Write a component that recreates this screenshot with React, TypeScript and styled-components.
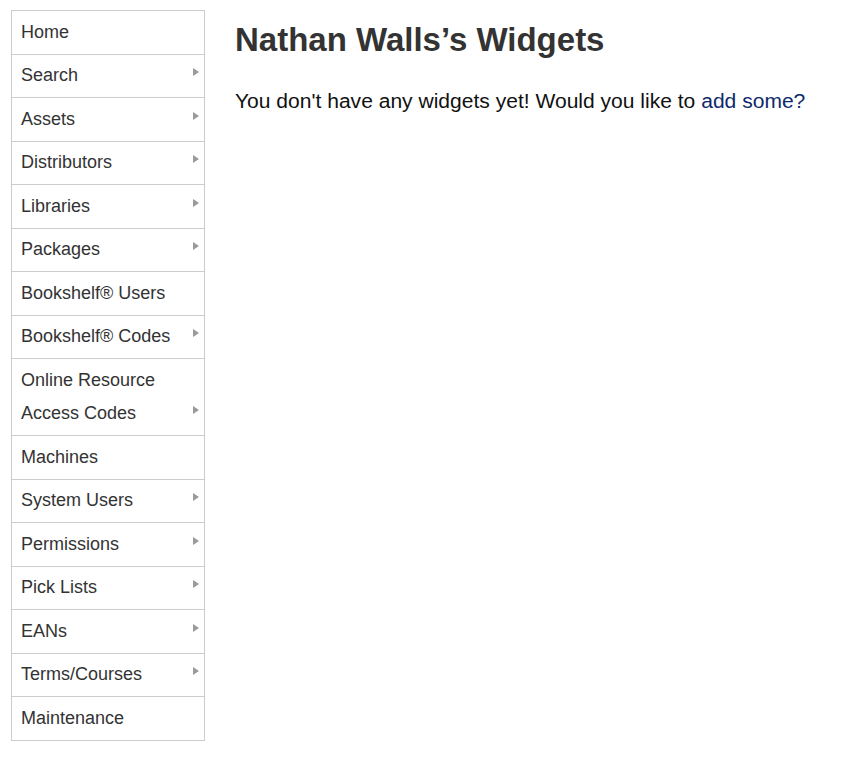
import React from "react";
import styled, { createGlobalStyle } from "styled-components";

const Global = createGlobalStyle`
  html, body { margin: 0; padding: 0; background: #fff; }
  body { font-family: "Liberation Sans", Arial, Helvetica, sans-serif; color: #333; }
`;

const Page = styled.div`
  display: flex;
  align-items: flex-start;
  gap: 30px;
  padding: 10px 0 0 11px;
`;

const Nav = styled.ul`
  list-style: none;
  margin: 0;
  padding: 0;
  width: 192px;
  border: 1px solid #ccc;
  border-bottom: none;
  flex: none;
`;

const NavItem = styled.li<{ $sub?: boolean }>`
  position: relative;
  padding: 4.5px 24px 4.5px 9px;
  border-bottom: 1px solid #ccc;
  font-size: 18px;
  line-height: 33.5px;
  color: #333;
  ${(p) =>
    p.$sub &&
    `
    &::after {
      content: "";
      position: absolute;
      right: 5px;
      bottom: 21px;
      width: 0;
      height: 0;
      border-top: 4.5px solid transparent;
      border-bottom: 4.5px solid transparent;
      border-left: 6px solid #9a9a9a;
    }
  `}
`;

const Main = styled.main`
  padding-top: 11px;
`;

const Title = styled.h1`
  margin: 0;
  font-size: 33px;
  font-weight: bold;
  line-height: 38px;
  color: #333;
`;

const Text = styled.p`
  margin: 29px 0 0;
  font-size: 21.05px;
  line-height: 26px;
  color: #111;
`;

const Link = styled.a`
  color: #0f2a6b;
  text-decoration: none;
`;

const items: { label: React.ReactNode; sub: boolean }[] = [
  { label: "Home", sub: false },
  { label: "Search", sub: true },
  { label: "Assets", sub: true },
  { label: "Distributors", sub: true },
  { label: "Libraries", sub: true },
  { label: "Packages", sub: true },
  { label: "Bookshelf® Users", sub: false },
  { label: "Bookshelf® Codes", sub: true },
  { label: <>Online Resource<br />Access Codes</>, sub: true },
  { label: "Machines", sub: false },
  { label: "System Users", sub: true },
  { label: "Permissions", sub: true },
  { label: "Pick Lists", sub: true },
  { label: "EANs", sub: true },
  { label: "Terms/Courses", sub: true },
  { label: "Maintenance", sub: false },
];

export default function App() {
  return (
    <>
      <Global />
      <Page>
        <Nav>
          {items.map((it, i) => (
            <NavItem key={i} $sub={it.sub}>
              {it.label}
            </NavItem>
          ))}
        </Nav>
        <Main>
          <Title>Nathan Walls’s Widgets</Title>
          <Text>
            You don't have any widgets yet! Would you like to <Link href="#">add some?</Link>
          </Text>
        </Main>
      </Page>
    </>
  );
}
